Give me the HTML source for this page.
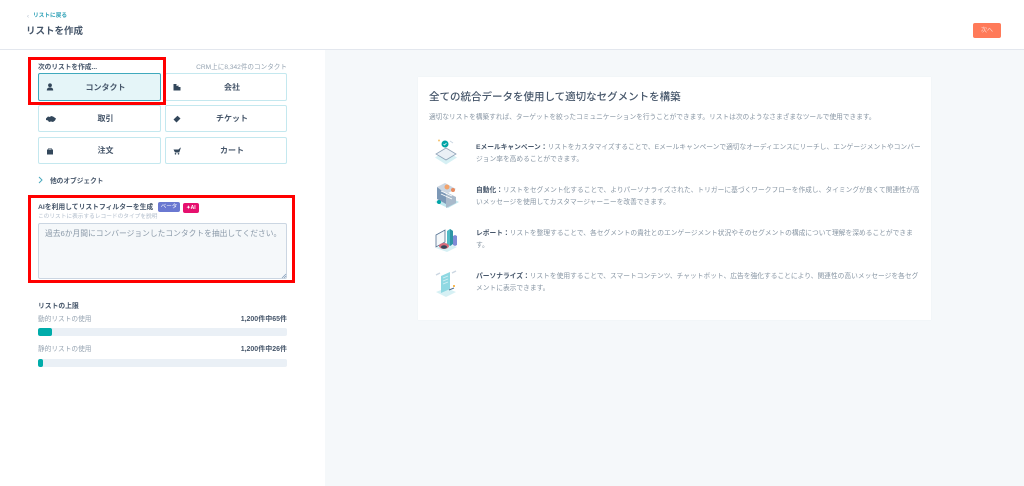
<!DOCTYPE html>
<html lang="ja"><head><meta charset="utf-8"><title>リストを作成</title>
<style>
*{box-sizing:border-box}
html,body{margin:0;padding:0;width:1024px;height:486px;overflow:hidden;background:#fff}
body{position:relative;font-family:"Liberation Sans","Noto Sans CJK JP",sans-serif;color:#46566a;filter:blur(.3px)}
.a{position:absolute;white-space:nowrap;line-height:1}
.btn{position:absolute;background:#fff;border:1px solid #c4e8ef;border-radius:2px;font-size:8px;font-weight:700;color:#46566a;display:flex;align-items:center;justify-content:center;padding-left:12px}
.btn svg{position:absolute;left:7px;top:50%;transform:translateY(-50%)}
.red{position:absolute;border:3px solid #f00}
.bar{position:absolute;left:38px;width:249px;height:8px;background:#eaf0f6;border-radius:2px;overflow:hidden}
.bar i{display:block;height:100%;background:#00acaa;border-radius:2px}
.p{position:absolute;left:476px;width:446px;font-size:6.74px;line-height:12px;color:#8795a3;white-space:nowrap}
.p b{color:#46566a}
</style></head><body>
<div class="a" style="left:0;top:49px;width:1024px;height:1px;background:#e3e7ee"></div>
<div class="a" style="left:325px;top:50px;width:699px;height:436px;background:#f5f8fa"></div>
<div class="a" style="left:27px;top:14px;font-size:6px;color:#b0bccb">‹</div>
<div class="a" style="left:33px;top:14px;font-size:5.700px;font-weight:700;color:#2a9fb5">リストに戻る</div>
<div class="a" style="left:26px;top:27px;font-size:9.500px;font-weight:700;color:#46566a">リストを作成</div>
<div class="a" style="left:973px;top:23px;width:28px;height:15px;background:#ff7a59;border-radius:2px;color:#ffd9cf;font-size:6px;text-align:center;line-height:17px">次へ</div>

<div class="a" style="left:38px;top:65px;font-size:6.700px;font-weight:700">次のリストを作成...</div>
<div class="a" style="right:737px;top:65px;font-size:6.600px;color:#95a3b1">CRM上に8,342件のコンタクト</div>

<div class="btn" style="left:38px;top:73px;width:123px;height:28px;background:#e5f5f8;border:1px solid #3fa9bd"><svg width="8" height="8" viewBox="0 0 8 8"><circle cx="4" cy="2.300" r="1.900" fill="#33475b"/><path d="M.8 7.500c0-2.200 1.200-3 3.200-3s3.200.8 3.200 3z" fill="#33475b"/></svg>コンタクト</div>
<div class="btn" style="left:165px;top:73px;width:122px;height:28px"><svg width="8" height="8" viewBox="0 0 8 8"><path d="M.5 7.500V1h3v2h1V2.500h1V4h2v3.500z" fill="#33475b"/></svg>会社</div>
<div class="btn" style="left:38px;top:105px;width:123px;height:27px"><svg width="10" height="7" viewBox="0 0 10 7"><path d="M0 3l2-2 2 .5L5 .5l2 .5 3 2-1 2-2 1.500-2-.5-2 .5L2 5 0 4.500z" fill="#33475b"/></svg>取引</div>
<div class="btn" style="left:165px;top:105px;width:122px;height:27px"><svg width="8" height="8" viewBox="0 0 8 8"><path d="M4.500.8L7.500 3.500 3.500 7.500.5 4.500z" fill="#33475b"/></svg>チケット</div>
<div class="btn" style="left:38px;top:137px;width:123px;height:27px"><svg width="8" height="8" viewBox="0 0 8 8"><path d="M1 2.500h1.500V1h3v1.500H7v5H1zM3 2.500h2V1.500H3z" fill="#33475b" fill-rule="evenodd"/></svg>注文</div>
<div class="btn" style="left:165px;top:137px;width:122px;height:27px"><svg width="8" height="8" viewBox="0 0 8 8"><path d="M.5 2.500h5l2-2 .3.4L6.300 5.500H2z" fill="#33475b"/><circle cx="2.500" cy="6.800" r=".8" fill="#33475b"/><circle cx="5.500" cy="6.800" r=".8" fill="#33475b"/></svg>カート</div>

<div class="red" style="left:28px;top:57px;width:138px;height:48px"></div>

<svg class="a" style="left:38px;top:176px" width="5" height="8" viewBox="0 0 5 8"><path d="M1 1l3 3-3 3" fill="none" stroke="#4aa9bd" stroke-width="1"/></svg>
<div class="a" style="left:50px;top:179px;font-size:6.700px;font-weight:700">他のオブジェクト</div>

<div class="a" style="left:38px;top:205px;font-size:6.800px;font-weight:700">AIを利用してリストフィルターを生成</div>
<div class="a" style="left:158px;top:202px;width:22px;height:10px;background:#6a78d1;border-radius:2px;color:#fff;font-size:5.500px;text-align:center;line-height:10px">ベータ</div>
<div class="a" style="left:183px;top:203px;width:16px;height:10px;background:#e6106e;border-radius:2px;color:#fff;font-size:5px;font-weight:700;text-align:center;line-height:10px">✦AI</div>
<div class="a" style="left:38px;top:215px;font-size:5.700px;color:#b0bccb">このリストに表示するレコードのタイプを説明</div>
<div class="a" style="left:38px;top:223px;width:249px;height:56px;background:#f5f8fa;border:1px solid #cbd6e2;border-radius:2px"></div>
<div class="a" style="left:45px;top:230px;font-size:7.760px;color:#8a99a8">過去6か月間にコンバージョンしたコンタクトを抽出してください。</div>
<svg class="a" style="left:281px;top:273px" width="6" height="6" viewBox="0 0 6 6"><path d="M1 5l4-4M3 5l2-2" stroke="#7c98b6" stroke-width=".7"/></svg>
<div class="red" style="left:28px;top:195px;width:267px;height:88px"></div>

<div class="a" style="left:38px;top:304px;font-size:6.800px;font-weight:700">リストの上限</div>
<div class="a" style="left:38px;top:317px;font-size:6.700px;color:#95a3b1">動的リストの使用</div>
<div class="a" style="right:737px;top:316px;font-size:7px;font-weight:700">1,200件中65件</div>
<div class="bar" style="top:328px"><i style="width:14px"></i></div>
<div class="a" style="left:38px;top:347px;font-size:6.700px;color:#95a3b1">静的リストの使用</div>
<div class="a" style="right:737px;top:346px;font-size:7px;font-weight:700">1,200件中26件</div>
<div class="bar" style="top:359px"><i style="width:5px"></i></div>

<div class="a" style="left:418px;top:77px;width:513px;height:243px;background:#fff;box-shadow:0 0 1px #e5ebf2"></div>
<div class="a" style="left:429px;top:92px;font-size:10.500px;font-weight:500;color:#46566a">全ての統合データを使用して適切なセグメントを構築</div>
<div class="a" style="left:429px;top:115px;font-size:6.700px;color:#8795a3">適切なリストを構築すれば、ターゲットを絞ったコミュニケーションを行うことができます。リストは次のようなさまざまなツールで使用できます。</div>

<svg class="a" style="left:434px;top:138px" width="24" height="28" viewBox="0 0 24 28">
<path d="M12 13l11 6.500-11 7-11-7z" fill="#d6f0f4"/><path d="M12 10l10 6-10 6-10-6z" fill="#eaf0f6" stroke="#8fa3b8" stroke-width=".8"/>
<circle cx="11" cy="6" r="3.500" fill="#00a4a6"/><path d="M9.500 6l1 1 2-2" stroke="#fff" stroke-width=".7" fill="none"/><circle cx="5" cy="2.500" r="1" fill="#f5c26b"/><path d="M16 3l3 2" stroke="#cbd6e2"/>
</svg>
<div class="p" style="top:142px"><b>Eメールキャンペーン：</b>リストをカスタマイズすることで、Eメールキャンペーンで適切なオーディエンスにリーチし、エンゲージメントやコンバー<br>ジョン率を高めることができます。</div>

<svg class="a" style="left:434px;top:182px" width="26" height="27" viewBox="0 0 26 27">
<path d="M13 14l12 6-11 6L1 20z" fill="#bfe6ee"/><path d="M3 5l9 5v12l-9-5z" fill="#7c98b6"/><path d="M12 10l10 5v6l-10 5z" fill="#a9bacb"/><path d="M3 5l8-4 11 6-10 5z" fill="#cbd6e2"/><circle cx="13" cy="5" r="2.500" fill="#f2a36b"/><circle cx="19" cy="8" r="2" fill="#e88b5f"/><circle cx="5" cy="20" r="2" fill="#00a4a6"/><path d="M7 9l11 5M7 12l11 5" stroke="#fff" stroke-width=".8"/>
</svg>
<div class="p" style="top:185px"><b>自動化：</b>リストをセグメント化することで、よりパーソナライズされた、トリガーに基づくワークフローを作成し、タイミングが良くて関連性が高<br>いメッセージを使用してカスタマージャーニーを改善できます。</div>

<svg class="a" style="left:434px;top:225px" width="26" height="27" viewBox="0 0 26 27">
<path d="M12 18l11 4-10 5-11-4z" fill="#d6f0f4"/><path d="M2 10l9-5v12l-9 5z" fill="#f5f8fa" stroke="#516f90" stroke-width=".8"/><path d="M13 6l3-2 3 2v13l-3 2-3-2z" fill="#4fb9c4"/><path d="M16 4l3 2v13l-3 2z" fill="#2d95a5"/><path d="M19 11l2-1 2 1v9l-2 1-2-1z" fill="#7f8bd6"/><ellipse cx="10" cy="21" rx="5" ry="3" fill="#d86c7c"/><ellipse cx="10" cy="22" rx="3" ry="1.800" fill="#33475b"/>
</svg>
<div class="p" style="top:228px"><b>レポート：</b>リストを整理することで、各セグメントの貴社とのエンゲージメント状況やそのセグメントの構成について理解を深めることができま<br>す。</div>

<svg class="a" style="left:434px;top:269px" width="24" height="28" viewBox="0 0 24 28">
<path d="M12 19l10 4-10 5-10-5z" fill="#d6f0f4"/><path d="M7 7l9-4v17l-9 4z" fill="#8fd8e2"/><path d="M9 9l5-2M9 12l5-2M9 15l5-2" stroke="#d6f0f4" stroke-width=".8"/><path d="M2 6l4-2M18 4l4-2" stroke="#cbd6e2" stroke-width="1.500"/><path d="M15 21l5-2" stroke="#516f90"/><circle cx="20" cy="17" r="1" fill="#f5a623"/>
</svg>
<div class="p" style="top:271px"><b>パーソナライズ：</b>リストを使用することで、スマートコンテンツ、チャットボット、広告を強化することにより、関連性の高いメッセージを各セグ<br>メントに表示できます。</div>
</body></html>
